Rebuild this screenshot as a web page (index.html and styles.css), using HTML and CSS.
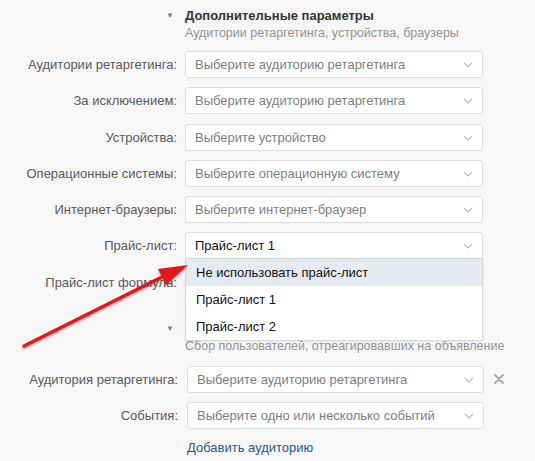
FILE: index.html
```html
<!DOCTYPE html>
<html lang="ru">
<head>
    <meta charset="UTF-8">
    <title>Дополнительные параметры</title>
    <link rel="stylesheet" href="styles.css">
</head>
<body>
    <div class="form">
        <div class="section">
            <div class="head">
                <span class="toggle">&#9660;</span>
                <div>
                    <div class="head-title">Дополнительные параметры</div>
                    <div class="head-sub">Аудитории ретаргетинга, устройства, браузеры</div>
                </div>
            </div>

            <div class="rows">
                <div class="row">
                    <label class="label">Аудитории ретаргетинга:</label>
                    <div class="select">Выберите аудиторию ретаргетинга<svg class="chevron" width="10" height="6" viewBox="0 0 10 6"><path d="M1 1 L5 5 L9 1" fill="none" stroke="#b4bdc7" stroke-width="1.2"/></svg></div>
                </div>
                <div class="row">
                    <label class="label">За исключением:</label>
                    <div class="select">Выберите аудиторию ретаргетинга<svg class="chevron" width="10" height="6" viewBox="0 0 10 6"><path d="M1 1 L5 5 L9 1" fill="none" stroke="#b4bdc7" stroke-width="1.2"/></svg></div>
                </div>
                <div class="row">
                    <label class="label">Устройства:</label>
                    <div class="select">Выберите устройство<svg class="chevron" width="10" height="6" viewBox="0 0 10 6"><path d="M1 1 L5 5 L9 1" fill="none" stroke="#b4bdc7" stroke-width="1.2"/></svg></div>
                </div>
                <div class="row">
                    <label class="label">Операционные системы:</label>
                    <div class="select">Выберите операционную систему<svg class="chevron" width="10" height="6" viewBox="0 0 10 6"><path d="M1 1 L5 5 L9 1" fill="none" stroke="#b4bdc7" stroke-width="1.2"/></svg></div>
                </div>
                <div class="row">
                    <label class="label">Интернет-браузеры:</label>
                    <div class="select">Выберите интернет-браузер<svg class="chevron" width="10" height="6" viewBox="0 0 10 6"><path d="M1 1 L5 5 L9 1" fill="none" stroke="#b4bdc7" stroke-width="1.2"/></svg></div>
                </div>
                <div class="row">
                    <label class="label">Прайс-лист:</label>
                    <div class="select select-open">Прайс-лист 1<svg class="chevron" width="10" height="6" viewBox="0 0 10 6"><path d="M1 1 L5 5 L9 1" fill="none" stroke="#b4bdc7" stroke-width="1.2"/></svg>
                        <ul class="dropdown">
                            <li class="option active">Не использовать прайс-лист</li>
                            <li class="option">Прайс-лист 1</li>
                            <li class="option">Прайс-лист 2</li>
                        </ul>
                    </div>
                </div>
                <div class="row">
                    <label class="label">Прайс-лист формула:</label>
                    <div class="select"></div>
                </div>
            </div>
        </div>

        <div class="section section-second">
            <div class="head">
                <span class="toggle">&#9660;</span>
                <div>
                    <div class="head-title head-title-hidden"></div>
                    <div class="head-sub">Сбор пользователей, отреагировавших на объявление</div>
                </div>
            </div>

            <div class="rows">
                <div class="row">
                    <label class="label">Аудитория ретаргетинга:</label>
                    <div class="select">Выберите аудиторию ретаргетинга<svg class="chevron" width="10" height="6" viewBox="0 0 10 6"><path d="M1 1 L5 5 L9 1" fill="none" stroke="#b4bdc7" stroke-width="1.2"/></svg></div>
                    <span class="remove">
                        <svg width="10" height="10" viewBox="0 0 10 10"><path d="M1 1 L9 9 M9 1 L1 9" stroke="#9aabbf" stroke-width="1.8" stroke-linecap="round"/></svg>
                    </span>
                </div>
                <div class="row">
                    <label class="label">События:</label>
                    <div class="select">Выберите одно или несколько событий<svg class="chevron" width="10" height="6" viewBox="0 0 10 6"><path d="M1 1 L5 5 L9 1" fill="none" stroke="#b4bdc7" stroke-width="1.2"/></svg></div>
                </div>
                <div class="row row-link">
                    <span></span>
                    <a class="link" href="#">Добавить аудиторию</a>
                </div>
            </div>
        </div>
    </div>

    <svg class="pointer" width="535" height="461" viewBox="0 0 535 461">
        <defs>
            <filter id="shade" x="-10%" y="-10%" width="120%" height="130%">
                <feDropShadow dx="0" dy="1.5" stdDeviation="1.2" flood-color="#000" flood-opacity="0.35"/>
            </filter>
        </defs>
        <g filter="url(#shade)">
            <line x1="24" y1="346" x2="166" y2="275" stroke="#e3191c" stroke-width="3.4" stroke-linecap="round"/>
            <polygon points="188,265 158,269 166,285" fill="#e3191c"/>
        </g>
    </svg>
</body>
</html>
```

FILE: styles.css
```css
body {
    margin: 0;
    background-color: #f7f7f7;
    font-family: "Liberation Sans", Arial, sans-serif;
    font-size: 13px;
    color: #222;
}

.form {
    padding-top: 7px;
}

.section-second {
    margin-top: 24px;
}

.head {
    display: grid;
    grid-template-columns: 177px auto;
    column-gap: 8px;
}

.toggle {
    text-align: right;
    padding-right: 3px;
    padding-top: 5px;
    font-size: 8px;
    line-height: 8px;
    color: #7c7c7c;
}

.head-title {
    font-weight: bold;
    font-size: 13px;
    line-height: 18px;
    color: #333;
}

.head-title-hidden {
    height: 18px;
}

.head-sub {
    font-size: 12.5px;
    line-height: 17px;
    color: #939393;
}

.rows {
    display: flex;
    flex-direction: column;
    gap: 9.3px;
    margin-top: 9px;
}

.section-second .rows {
    margin-top: 11px;
    gap: 9px;
}

.row {
    display: grid;
    grid-template-columns: 177px 298px auto;
    column-gap: 8px;
    align-items: center;
}

.section-second .row {
    grid-template-columns: 178px 297px auto;
    column-gap: 9px;
}

.label {
    text-align: right;
    color: #5a5a5a;
}

.select {
    position: relative;
    height: 25px;
    line-height: 25px;
    padding-left: 9px;
    background-color: #fff;
    border: 1px solid #dcdfe3;
    border-radius: 3px;
    color: #7b7f84;
}

.chevron {
    position: absolute;
    right: 9px;
    top: 10px;
}

.select-open {
    color: #111;
    border-radius: 3px 3px 0 0;
    z-index: 2;
}

.dropdown {
    position: absolute;
    left: -1px;
    right: -1px;
    top: 25px;
    margin: 0;
    padding: 0;
    list-style: none;
    background-color: #fff;
    border: 1px solid #d3d9de;
    box-shadow: 0 1px 3px rgba(0, 0, 0, 0.08);
}

.option {
    height: 27px;
    line-height: 27px;
    padding-left: 10px;
    color: #111;
}

.option.active {
    background-color: #e5ebf1;
}

.remove {
    display: flex;
    align-items: center;
    padding-left: 1px;
}

.row-link {
    margin-top: 2px;
}

.link {
    color: #2a5885;
    text-decoration: none;
}

.pointer {
    position: absolute;
    left: 0;
    top: 0;
    z-index: 5;
    pointer-events: none;
}
```
